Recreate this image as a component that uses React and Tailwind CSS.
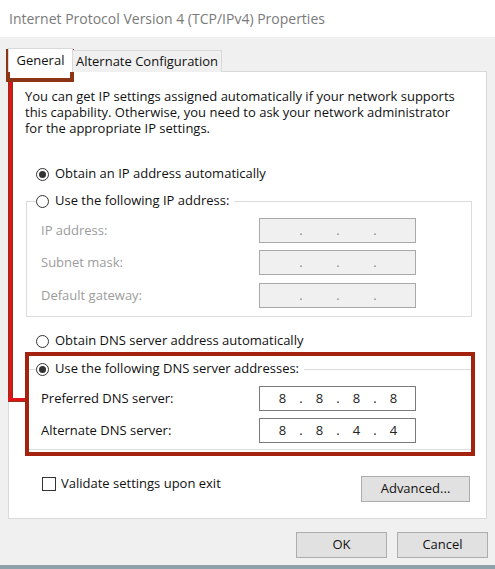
import React from 'react';

const font = { fontFamily: '"Open Sans", "Noto Sans", sans-serif' };

const Radio = ({ checked }) => (
  <span className="w-[13px] h-[13px] rounded-full border border-[#333] bg-white flex items-center justify-center shrink-0">
    {checked && <span className="w-[7px] h-[7px] rounded-full bg-[#333]" />}
  </span>
);

const RadioRow = ({ checked, label, className = '' }) => (
  <div className={`flex items-center h-[16px] gap-[6px] ${className}`}>
    <Radio checked={checked} />
    <span className="text-[13px] text-[#111] whitespace-nowrap">{label}</span>
  </div>
);

// caja con los cuatro octetos
const IpBox = ({ octets, disabled }) => (
  <div
    className={`w-[157px] h-[25px] border flex items-center pl-[9px] text-[13px] ${
      disabled ? 'bg-[#f0f0f0] border-[#a8a8a8] text-[#8a8a8a]' : 'bg-white border-[#7a7a7a] text-[#222]'
    }`}
  >
    {[0, 1, 2, 3].map((i) => (
      <React.Fragment key={i}>
        <span className="w-[27px] text-center">{octets ? octets[i] : ''}</span>
        {i < 3 && <span className="w-[10px] text-center">.</span>}
      </React.Fragment>
    ))}
  </div>
);

const FieldRow = ({ label, octets, disabled, className = '' }) => (
  <div className={`flex items-center ${className}`}>
    <span className={`w-[218px] ml-[14px] text-[13px] ${disabled ? 'text-[#9c9c9c]' : 'text-[#111]'}`}>{label}</span>
    <IpBox octets={octets} disabled={disabled} />
  </div>
);

const Boton = ({ children, className = '' }) => (
  <button className={`h-[26px] bg-[#e1e1e1] border border-[#adadad] text-[13px] text-[#111] ${className}`}>
    {children}
  </button>
);

export default function App() {
  return (
    <div className="relative w-[495px] h-[569px] overflow-hidden bg-[#f0f0f0] flex flex-col" style={font}>
      {/* barra de titulo */}
      <div className="h-[37px] bg-white flex items-center pl-[9px] shrink-0">
        <span className="text-[14px] text-[#7a7a7a] whitespace-nowrap">Internet Protocol Version 4 (TCP/IPv4) Properties</span>
      </div>

      {/* pestañas */}
      <div className="flex items-end mt-[11px] ml-[8px] h-[24px] relative z-10 -mb-px shrink-0">
        <div className="w-[65px] h-[24px] bg-white border border-b-0 border-[#d9d9d9] flex items-start justify-center pt-[2px] text-[13px] text-[#111]">
          General
        </div>
        <div className="w-[150px] h-[22px] -ml-px bg-[#f0f0f0] border border-b-0 border-[#d9d9d9] flex items-center justify-center text-[13px] text-[#111]">
          Alternate Configuration
        </div>
      </div>

      {/* panel */}
      <div className="ml-[8px] w-[479px] h-[448px] bg-white border border-[#d9d9d9] flex flex-col shrink-0">
        <div className="mt-[16px] ml-[16px] text-[13px] leading-[16px] text-[#111] whitespace-nowrap">
          <div>You can get IP settings assigned automatically if your network supports</div>
          <div>this capability. Otherwise, you need to ask your network administrator</div>
          <div>for the appropriate IP settings.</div>
        </div>

        <RadioRow checked label="Obtain an IP address automatically" className="mt-[30px] ml-[27px]" />

        <div className="mt-[19px] ml-[17px] w-[446px] border border-[#dcdcdc] pb-[8px]">
          <div className="-mt-[9px] ml-[9px] flex w-fit bg-white pr-[5px]">
            <RadioRow label="Use the following IP address:" />
          </div>
          <FieldRow disabled label="IP address:" className="mt-[9px]" />
          <FieldRow disabled label="Subnet mask:" className="mt-[7px]" />
          <FieldRow disabled label="Default gateway:" className="mt-[8px]" />
        </div>

        <RadioRow label="Obtain DNS server address automatically" className="mt-[16px] ml-[27px]" />

        <div className="mt-[20px] ml-[17px] w-[446px] border border-[#dcdcdc] pb-[6px]">
          <div className="-mt-[9px] ml-[9px] flex w-fit bg-white pr-[5px]">
            <RadioRow checked label="Use the following DNS server addresses:" />
          </div>
          <FieldRow label="Preferred DNS server:" octets={['8', '8', '8', '8']} className="mt-[9px]" />
          <FieldRow label="Alternate DNS server:" octets={['8', '8', '4', '4']} className="mt-[7px]" />
        </div>

        <div className="mt-[26px] flex items-start justify-between pl-[33px] pr-[16px]">
          <div className="flex items-center gap-[5px] h-[15px]">
            <span className="w-[14px] h-[14px] border border-[#333] bg-white" />
            <span className="text-[13px] text-[#111]">Validate settings upon exit</span>
          </div>
          <Boton className="w-[109px]">Advanced...</Boton>
        </div>
      </div>

      {/* botones */}
      <div className="flex mt-[13px] ml-[296px] gap-[10px] shrink-0">
        <Boton className="w-[91px]">OK</Boton>
        <Boton className="w-[91px]">Cancel</Boton>
      </div>

      <div className="mt-auto h-[4px] bg-[#8fa1a9] shrink-0" />

      {/* marcas rojas */}
      <div className="absolute left-[6px] top-[49px] w-[68px] h-[33px] border-4 border-[#8c3413]" />
      <div className="absolute left-[8px] top-[82px] w-[5px] h-[320px] bg-[#e3121a] border-x border-[#8c3413]" />
      <div className="absolute left-[8px] top-[398px] w-[19px] h-[4px] bg-[#e3121a] border-b border-[#8c3413]" />
      <div className="absolute left-[25px] top-[352px] w-[450px] h-[104px] border-4 border-[#a3230f]" />
    </div>
  );
}
